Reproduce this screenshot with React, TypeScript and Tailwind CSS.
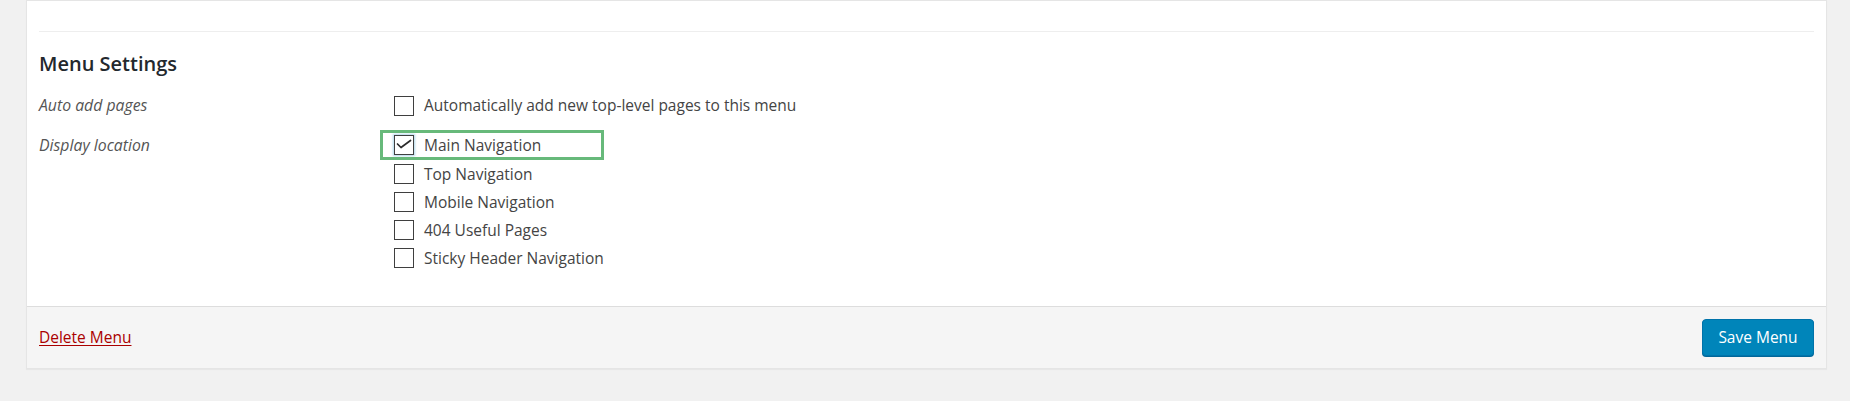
const font = { fontFamily: '"Open Sans", "Noto Sans", sans-serif' };

const locations = [
  { id: 'main', label: 'Main Navigation', checked: true },
  { id: 'top', label: 'Top Navigation', checked: false },
  { id: 'mobile', label: 'Mobile Navigation', checked: false },
  { id: 'useful', label: '404 Useful Pages', checked: false },
  { id: 'sticky', label: 'Sticky Header Navigation', checked: false },
];

const Checkbox = ({ checked }: { checked?: boolean }) => (
  <span
    className={`flex h-5 w-5 shrink-0 items-center justify-center border border-[#3f3f3f] bg-white ${
      checked ? 'shadow-[0_0_2px_1px_rgba(30,140,190,0.35)]' : ''
    }`}
  >
    {checked && (
      <svg width="18" height="18" viewBox="0 0 18 18" fill="none">
        <path d="M2.5 8 L6 11.5 L15.5 4.5" stroke="#2b2b2b" strokeWidth="1.7" strokeLinecap="round" strokeLinejoin="round" />
      </svg>
    )}
  </span>
);

export default function App() {
  return (
    <div className="h-[401px] w-[1850px] overflow-hidden bg-[#f1f1f1] pl-[26px]" style={font}>
      <div className="w-[1801px] border border-[#e5e5e5] bg-white shadow-[0_1px_1px_rgba(0,0,0,0.04)]">
        <div className="px-3 pt-[30px] pb-[38px]">
          <div className="border-t border-[#eeeeee]">
            <h3 className="mt-[18px] text-[20px] leading-[28px] font-semibold text-[#23282d]">Menu Settings</h3>

            <div className="mt-[16px] grid grid-cols-[355px_1fr] items-center">
              <span className="text-[15.8px] italic text-[#555]">Auto add pages</span>
              <label className="flex items-center gap-[10px] text-[15.5px] text-[#444]">
                <Checkbox />
                Automatically add new top-level pages to this menu
              </label>
            </div>

            <div className="mt-[17px] grid grid-cols-[355px_1fr] items-start">
              <span className="text-[15.8px] leading-5 italic text-[#555]">Display location</span>
              <div className="flex flex-col gap-2">
                {locations.map((loc) => (
                  <label
                    key={loc.id}
                    className={`relative flex items-center gap-[10px] text-[15.5px] leading-5 text-[#444] ${
                      loc.checked ? 'mb-[1px]' : ''
                    }`}
                  >
                    <Checkbox checked={loc.checked} />
                    {loc.label}
                    {loc.checked && (
                      <span className="pointer-events-none absolute -top-[5px] -left-[14px] h-[30px] w-[224px] border-[3px] border-[#67b97a]" />
                    )}
                  </label>
                ))}
              </div>
            </div>
          </div>
        </div>

        <div className="flex h-[62px] items-center justify-between border-t border-[#dddddd] bg-[#f5f5f5] px-3">
          <a href="#" className="text-[15.5px] text-[#a00] underline underline-offset-2">
            Delete Menu
          </a>
          <button className="h-[37px] w-[112px] rounded-[4px] border border-[#0073aa] bg-[#0085ba] text-[15.5px] text-white shadow-[0_1px_0_#006799]">
            Save Menu
          </button>
        </div>
      </div>
    </div>
  );
}
